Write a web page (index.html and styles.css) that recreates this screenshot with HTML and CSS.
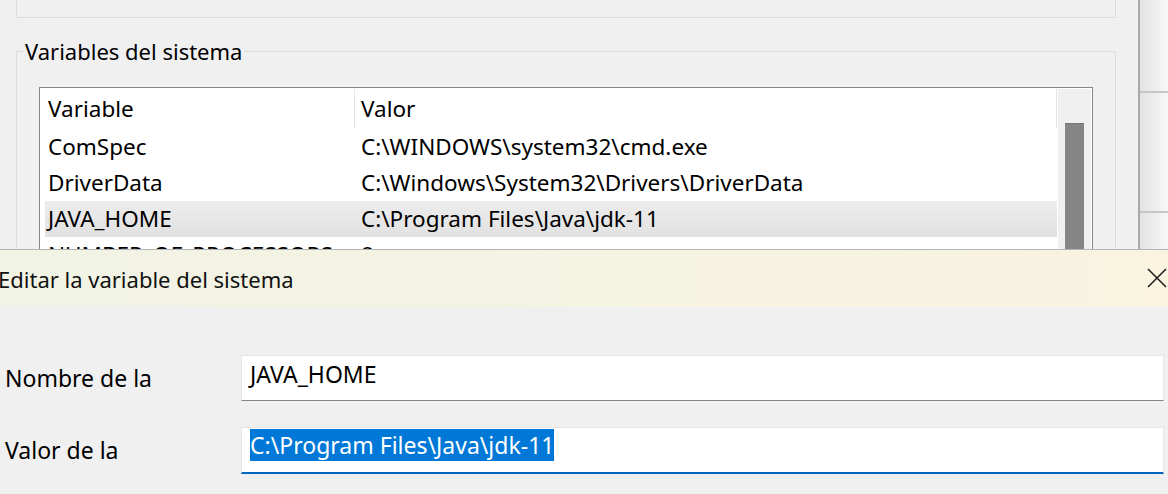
FILE: index.html
```html
<!DOCTYPE html>
<html lang="es">
<head>
<meta charset="utf-8">
<title>Editar la variable del sistema</title>
<link rel="stylesheet" href="styles.css">
</head>
<body>
<div class="back">
  <div class="back-main">
    <div class="group-top"></div>
    <fieldset class="group">
      <legend>Variables del sistema</legend>
      <div class="listbox">
        <div class="list-body">
          <div class="row header"><span class="c1">Variable</span><span class="c2">Valor</span></div>
          <div class="row"><span class="c1">ComSpec</span><span class="c2">C:\WINDOWS\system32\cmd.exe</span></div>
          <div class="row"><span class="c1">DriverData</span><span class="c2">C:\Windows\System32\Drivers\DriverData</span></div>
          <div class="row selected"><span class="c1">JAVA_HOME</span><span class="c2">C:\Program Files\Java\jdk-11</span></div>
          <div class="row"><span class="c1">NUMBER_OF_PROCESSORS</span><span class="c2">8</span></div>
        </div>
        <div class="scroll"><div class="thumb"></div></div>
      </div>
    </fieldset>
  </div>
  <div class="back-side">
    <div class="side-a"></div>
    <div class="side-b"></div>
    <div class="side-c"></div>
  </div>
</div>
<div class="dialog">
  <div class="titlebar">
    <span class="title">Editar la variable del sistema</span>
    <svg class="close" width="20" height="20" viewBox="0 0 20 20" aria-hidden="true"><path d="M1 1 L19 19 M19 1 L1 19" stroke="#1a1a1a" stroke-width="1.5" fill="none"/></svg>
  </div>
  <div class="dlg-body">
    <div class="field">
      <label class="lbl">Nombre de la</label>
      <div class="input">JAVA_HOME</div>
    </div>
    <div class="field">
      <label class="lbl">Valor de la</label>
      <div class="input focused"><span class="sel">C:\Program Files\Java\jdk-11</span></div>
    </div>
  </div>
</div>
</body>
</html>
```
FILE: styles.css
```css
html, body {
  margin: 0;
  padding: 0;
}
body {
  width: 1168px;
  height: 494px;
  overflow: hidden;
  background: #f0f0f0;
  font-family: "Noto Sans", "Open Sans", sans-serif;
  font-size: 22.5px;
  color: #000;
}

.back {
  display: flex;
  height: 249px;
  overflow: hidden;
}
.back-main {
  width: 1138px;
  padding-left: 16px;
  box-sizing: border-box;
}
.group-top {
  width: 1100px;
  height: 18px;
  border: 1px solid #dcdcdc;
  border-top: none;
  box-sizing: border-box;
}
.group {
  width: 1100px;
  box-sizing: border-box;
  margin: 19px 0 0 0;
  padding: 22px 0 0 6px;
  border: 1px solid #dcdcdc;
  min-inline-size: 0;
}
.group legend {
  padding: 0 2px;
  line-height: 28px;
  font-size: 22px;
}
.listbox {
  margin-left: 16px;
  width: 1054px;
  height: 300px;
  box-sizing: border-box;
  border: 1px solid #828790;
  background: #fff;
  display: flex;
}
.list-body {
  width: 1018px;
  padding: 0 1px 0 5px;
  box-sizing: border-box;
}
.row {
  display: flex;
  height: 36px;
  line-height: 36px;
  white-space: nowrap;
}
.row.header {
  height: 41px;
  line-height: 41px;
}
.c1 {
  width: 309px;
  padding-left: 3px;
  box-sizing: border-box;
}
.c2 {
  flex: 1;
  padding-left: 6px;
  border-left: 1px solid transparent;
  border-right: 1px solid transparent;
}
.header .c2 {
  border-left-color: #e5e5e5;
  border-right-color: #e5e5e5;
  margin: 1px 0 1px 0;
  line-height: 39px;
}
.row.selected {
  background: linear-gradient(#ededed, #e1e1e1);
}
.scroll {
  flex: 1;
  background: #f0f0f0;
  border-top: 1px solid #fff;
  border-right: 1px solid #fff;
  padding: 34px 0 0 7px;
}
.thumb {
  width: 19px;
  height: 300px;
  background: #858585;
  border-top: 1px solid #747474;
}

.back-side {
  flex: 1;
  border-left: 2px solid #a9a9a9;
  display: flex;
  flex-direction: column;
  background: linear-gradient(90deg, #e3e3e3, #f7f7f7);
}
.side-a {
  height: 91px;
  border-bottom: 2px solid #c6c6c6;
}
.side-b {
  height: 118px;
  border-bottom: 2px solid #c6c6c6;
}
.side-c {
  flex: 1;
}

.dialog {
  margin-left: -12px;
  width: 1180px;
  border-top: 1px solid #b4b4b4;
}
.titlebar {
  height: 57px;
  display: flex;
  align-items: center;
  justify-content: space-between;
  padding: 0 1px 0 10px;
  background: linear-gradient(90deg, #f1f3e5, #f9f3e0);
}
.title {
  font-size: 22px;
  color: #111;
  margin-top: 1px;
}
.close {
  display: block;
  margin-top: -1px;
}
.dlg-body {
  padding: 48px 0 0 17px;
  font-size: 23px;
}
.field {
  display: flex;
  margin-bottom: 26px;
}
.lbl {
  width: 236px;
  padding-top: 7px;
  line-height: 32px;
}
.input {
  width: 923px;
  height: 46px;
  box-sizing: border-box;
  background: #fff;
  border: 1px solid #e6e6e6;
  border-bottom: 1px solid #868686;
  padding: 2px 0 0 8px;
  line-height: 32px;
}
.input.focused {
  height: 47px;
  padding-top: 1px;
  border-bottom: 2px solid #0067c0;
}
.sel {
  background: #0078d7;
  color: #fff;
  display: inline-block;
}
```
